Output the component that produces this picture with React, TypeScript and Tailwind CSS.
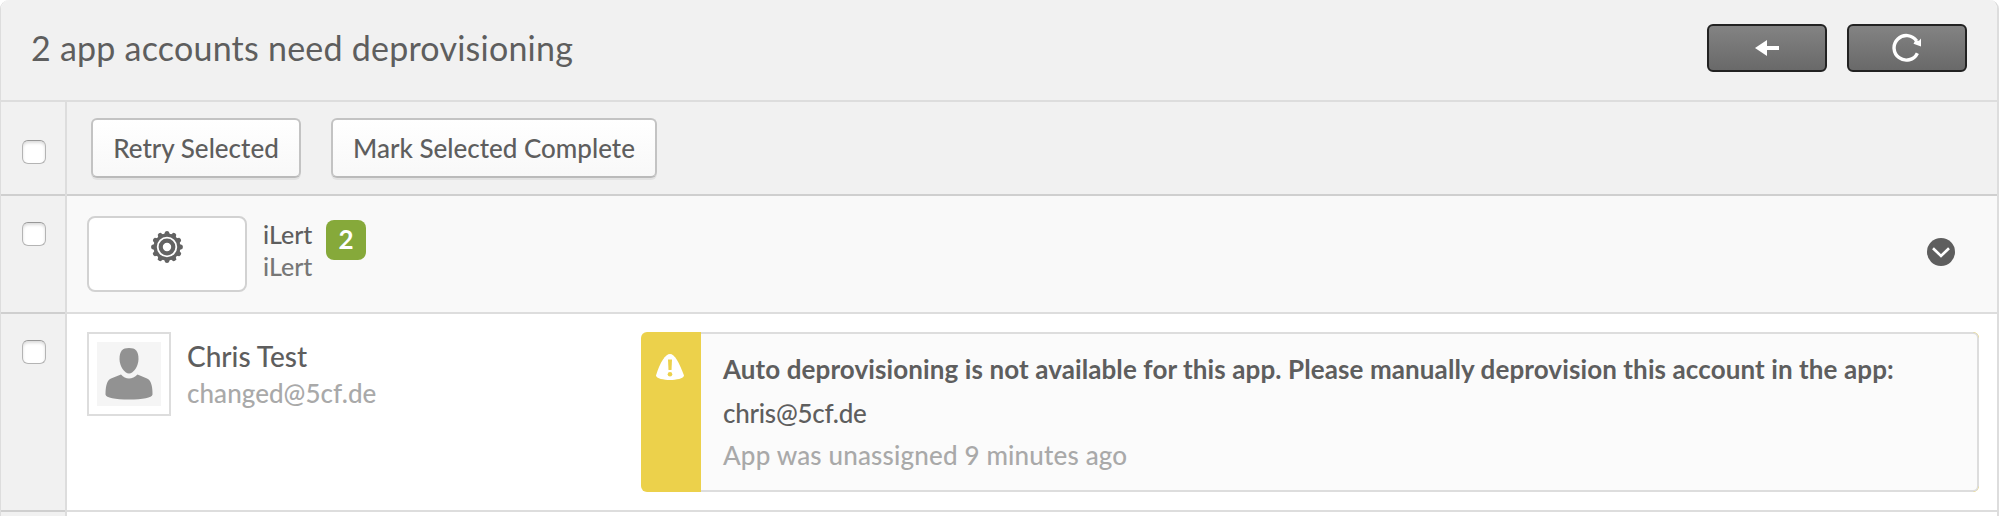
import type { ReactNode } from "react";

function Checkbox() {
  return (
    <button
      type="button"
      role="checkbox"
      aria-checked="false"
      className="size-6 shrink-0 rounded-[6px] border border-[#b4b4b4] border-t-[#989898] bg-white shadow-[inset_0_2px_3px_rgba(0,0,0,0.14)]"
    />
  );
}

function Row({
  height,
  checkTop,
  tone,
  border,
  children,
}: {
  height: string;
  checkTop: string;
  tone: string;
  border: string;
  children?: ReactNode;
}) {
  return (
    <div className={`flex ${height}`}>
      <div className="flex w-[66px] shrink-0 border-r-2 border-[#dddddd] bg-[#f1f1f1]">
        <div className={`flex flex-1 border-b-2 border-[#cfcfcf] pl-[21px] ${checkTop}`}>
          <Checkbox />
        </div>
      </div>
      <div className={`flex min-w-0 flex-1 items-start border-b-2 ${tone} ${border}`}>{children}</div>
    </div>
  );
}

function LightButton({ children, width }: { children: ReactNode; width: string }) {
  return (
    <button
      type="button"
      className={`h-[60px] rounded-[6px] border-2 border-[#c3c3c3] border-b-[#bababa] bg-linear-to-b from-white to-[#f8f8f8] pt-px text-center text-[26px] leading-[55px] whitespace-nowrap shadow-[0_2px_0_rgba(0,0,0,0.06)] ${width}`}
    >
      {children}
    </button>
  );
}

function DarkButton({ label, children }: { label: string; children: ReactNode }) {
  return (
    <button
      type="button"
      aria-label={label}
      className="flex h-12 w-[120px] items-center justify-center rounded-[6px] border-2 border-[#222222] bg-linear-to-b from-[#838383] to-[#696969]"
    >
      {children}
    </button>
  );
}

function GearIcon() {
  const teeth = [0, 30, 60, 90, 120, 150, 180, 210, 240, 270, 300, 330];
  return (
    <svg width="32" height="32" viewBox="-16 -16 32 32" fill="#636363">
      {teeth.map((a) => (
        <path key={a} d="M-3.2 -11.5L-1.9 -15.2Q0 -16.6 1.9 -15.2L3.2 -11.5Z" transform={`rotate(${a})`} />
      ))}
      <circle r="11.8" fill="none" stroke="#636363" strokeWidth="3.2" />
      <circle r="6.3" fill="none" stroke="#636363" strokeWidth="4.2" />
    </svg>
  );
}

export default function App() {
  return (
    <div className="h-[516px] w-[2002px] overflow-hidden bg-white font-['Lato',sans-serif] font-medium text-[#5e5e5e]">
      <div className="h-[516px] w-[1999px] overflow-hidden rounded-t-[9px] border-r-2 border-l border-[#dddddd] bg-white">
        <header className="flex h-[102px] items-start justify-between border-b-2 border-[#dddddd] bg-[#f1f1f1] pr-[30px] pl-[30px]">
          <h1 className="mt-[27px] text-[34px] leading-[42px] font-normal tracking-[0.23px]">
            2 app accounts need deprovisioning
          </h1>
          <div className="mt-6 flex gap-5">
            <DarkButton label="Back">
              <svg width="24" height="16" viewBox="0 0 24 16" fill="#fff">
                <path d="M0 8L12 0V6H24V10H12V16Z" />
              </svg>
            </DarkButton>
            <DarkButton label="Refresh">
              <svg width="30" height="30" viewBox="0 0 30 30" fill="none">
                <path d="M25.4 20.2A12.3 12.3 0 1 1 24.6 8" stroke="#fff" strokeWidth="3.4" />
                <path d="M29 5.5V13.5L21.5 10.8L23.3 7.5L27 7.8Z" fill="#fff" />
              </svg>
            </DarkButton>
          </div>
        </header>

        <Row height="h-[94px]" checkTop="pt-[38px]" tone="bg-[#f1f1f1]" border="border-[#cfcfcf]">
          <div className="flex gap-[30px] pt-4 pl-6">
            <LightButton width="w-[210px]">Retry Selected</LightButton>
            <LightButton width="w-[326px]">Mark Selected Complete</LightButton>
          </div>
        </Row>

        <Row height="h-[118px]" checkTop="pt-[26px]" tone="bg-[#f9f9f9]" border="border-[#dddddd]">
          <div className="mt-5 ml-5 flex h-[76px] w-40 items-start justify-center rounded-lg border-2 border-[#d2d2d2] bg-white pt-[13px]">
            <GearIcon />
          </div>
          <div className="mt-[22px] ml-4 w-[50px] text-[25px] leading-8">
            <div>iLert</div>
            <div className="text-[#777777]">iLert</div>
          </div>
          <div className="mt-6 ml-[13px] size-10 rounded-lg bg-[#86a93a] text-center text-[26px] leading-[38px] font-bold text-white">
            2
          </div>
          <button
            type="button"
            aria-label="Collapse"
            className="mt-[42px] mr-[42px] ml-auto flex size-7 items-center justify-center rounded-full bg-[#5e5e5e]"
          >
            <svg width="18" height="11" viewBox="0 0 18 11" fill="none" stroke="#fff" strokeWidth="2.6">
              <path d="M1 1.2L9 9L17 1.2" />
            </svg>
          </button>
        </Row>

        <Row height="h-[198px]" checkTop="pt-[26px]" tone="bg-white" border="border-[#dddddd]">
          <div className="mt-[18px] ml-5 size-[84px] border-2 border-[#dddddd] p-2">
            <svg width="64" height="64" viewBox="0 0 64 64">
              <rect width="64" height="64" fill="#f5f5f5" />
              <path
                d="M32 6C38.5 6 41.5 9 41.5 17C41.5 24 36.5 31.5 32 31.5C27.5 31.5 22.5 24 22.5 17C22.5 9 25.5 6 32 6Z"
                fill="#929292"
              />
              <path
                d="M24 32.5Q27.5 36.5 32 36.5Q36.5 36.5 40.5 32.5L50 36.5C55 38.5 55.5 47 55.5 52.5C55 56 46 57.5 32 57.5C18 57.5 9 56 8.5 52.5C8.5 47 9 38.5 14 36.5Z"
                fill="#929292"
              />
            </svg>
          </div>
          <div className="mt-6 ml-4 w-[452px]">
            <div className="text-[28px] leading-[37px]">Chris Test</div>
            <div className="text-[26px] leading-[36px] tracking-[0.05px] text-[#a9a9a9]">changed@5cf.de</div>
          </div>
          <div className="mt-[18px] mr-[18px] ml-[2px] flex h-40 flex-1 overflow-hidden rounded-[6px] bg-[#ecd14b]">
            <div className="flex w-[60px] shrink-0 items-start justify-center pt-[22px] pr-0.5">
              <svg width="28" height="26" viewBox="0 0 28 26">
                <path d="M14 0C18.5 0 23 8 28 21.5C28 24.5 20 26 14 26C8 26 0 24.5 0 21.5C4 8 9.5 0 14 0Z" fill="#fff" />
                <path d="M12 5.6H16L15.5 16H12.5Z" fill="#ecd14b" />
                <circle cx="14" cy="20.3" r="2.3" fill="#ecd14b" />
              </svg>
            </div>
            <div className="flex-1 rounded-r-[6px] border-2 border-l-0 border-[#dddddd] bg-[#fbfbfb] pl-[22px] text-[26px] whitespace-nowrap">
              <div className="mt-[13px] leading-[44px] font-bold tracking-[0.1px]">
                Auto deprovisioning is not available for this app. Please manually deprovision this account in the app:
              </div>
              <div className="leading-[44px] tracking-[-0.25px]">chris@5cf.de</div>
              <div className="leading-10 tracking-[0.17px] text-[#a9a9a9]">App was unassigned 9 minutes ago</div>
            </div>
          </div>
        </Row>

        <div className="flex h-1">
          <div className="w-[66px] border-r-2 border-[#dddddd] bg-[#f1f1f1]" />
        </div>
      </div>
    </div>
  );
}
